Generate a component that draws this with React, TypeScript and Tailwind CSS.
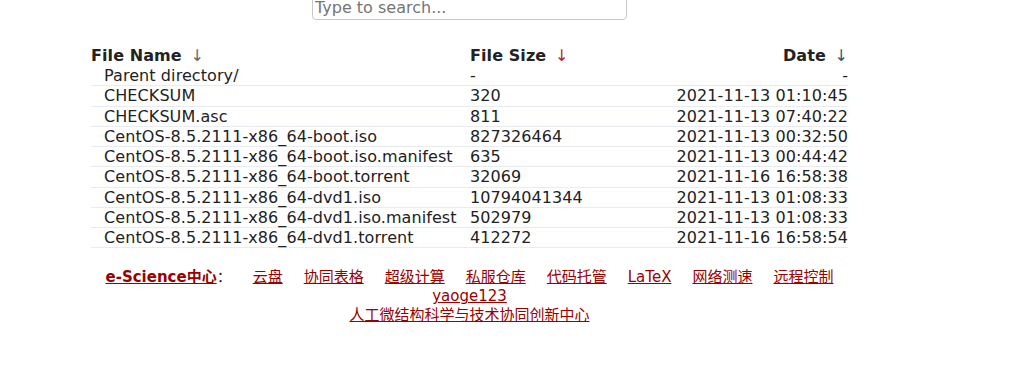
const files = [
  { name: "Parent directory/", size: "-", date: "-" },
  { name: "CHECKSUM", size: "320", date: "2021-11-13 01:10:45" },
  { name: "CHECKSUM.asc", size: "811", date: "2021-11-13 07:40:22" },
  { name: "CentOS-8.5.2111-x86_64-boot.iso", size: "827326464", date: "2021-11-13 00:32:50" },
  { name: "CentOS-8.5.2111-x86_64-boot.iso.manifest", size: "635", date: "2021-11-13 00:44:42" },
  { name: "CentOS-8.5.2111-x86_64-boot.torrent", size: "32069", date: "2021-11-16 16:58:38" },
  { name: "CentOS-8.5.2111-x86_64-dvd1.iso", size: "10794041344", date: "2021-11-13 01:08:33" },
  { name: "CentOS-8.5.2111-x86_64-dvd1.iso.manifest", size: "502979", date: "2021-11-13 01:08:33" },
  { name: "CentOS-8.5.2111-x86_64-dvd1.torrent", size: "412272", date: "2021-11-16 16:58:54" },
];

const links = ["云盘", "协同表格", "超级计算", "私服仓库", "代码托管", "LaTeX", "网络测速", "远程控制"];

const App = () => {
  return (
    <div
      className="min-h-[391px] w-full bg-white text-[#333] overflow-hidden"
      style={{ fontFamily: '"DejaVu Sans", Verdana, "Noto Sans CJK SC", sans-serif' }}
    >
      <div className="ml-[91px] w-[757px]">
        {/* search */}
        <div className="mt-[-5px] flex justify-center">
          <input
            placeholder="Type to search..."
            className="h-[25px] w-[315px] rounded-[4px] border border-[#c8c8c8] px-[2px] text-[16px] text-[#333] placeholder:text-[#757575] outline-none"
          />
        </div>

        {/* listing */}
        <div className="mt-[26px] text-[16px] leading-[20px] tracking-[0.08px]">
          <div className="grid grid-cols-[379px_1fr_auto] h-[20px] font-bold text-[#222]">
            <div>
              File Name <span className="ml-[3px] font-normal text-[#666]">↓</span>
            </div>
            <div>
              File Size <span className="ml-[3px] font-normal text-[#b22]">↓</span>
            </div>
            <div className="text-right">
              Date <span className="ml-[3px] font-normal text-[#357]">↓</span>
            </div>
          </div>
          {files.map((f) => (
            <div
              key={f.name}
              className="grid grid-cols-[379px_1fr_auto] h-[20.25px] leading-[19.25px] border-b border-[#e8ecf1] text-[#222]"
            >
              <div className="pl-[13px] whitespace-nowrap">{f.name}</div>
              <div>{f.size}</div>
              <div className="text-right">{f.date}</div>
            </div>
          ))}
        </div>

        {/* footer */}
        <div className="mt-[20px] text-center text-[15px] leading-[19px]">
          <div className="flex justify-center gap-[21px] whitespace-nowrap">
            <span>
              <a className="font-bold text-[#900] underline">e-Science中心</a>
              <span className="text-[#333]">：</span>
            </span>
            {links.map((l) => (
              <a key={l} className="text-[#900] underline">
                {l}
              </a>
            ))}
          </div>
          <div>
            <a className="text-[#900] underline">yaoge123</a>
          </div>
          <div>
            <a className="text-[#900] underline">人工微结构科学与技术协同创新中心</a>
          </div>
        </div>
      </div>
    </div>
  );
};

export default App;
